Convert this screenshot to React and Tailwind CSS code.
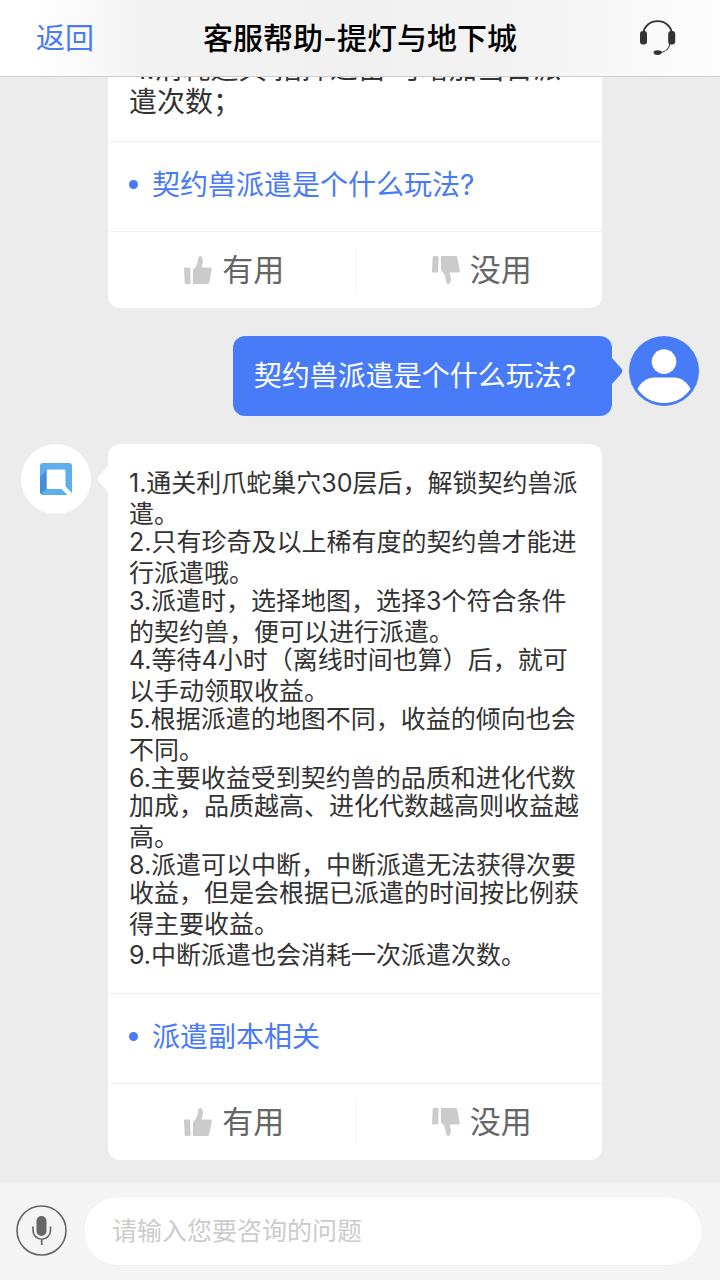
import React, { useState } from 'react';

const answerLines = [
  ['1.通关利爪蛇巢穴30层后，解锁契约兽派', '遣。'],
  ['2.只有珍奇及以上稀有度的契约兽才能进', '行派遣哦。'],
  ['3.派遣时，选择地图，选择3个符合条件', '的契约兽，便可以进行派遣。'],
  ['4.等待4小时（离线时间也算）后，就可', '以手动领取收益。'],
  ['5.根据派遣的地图不同，收益的倾向也会', '不同。'],
  ['6.主要收益受到契约兽的品质和进化代数', '加成，品质越高、进化代数越高则收益越', '高。'],
  ['8.派遣可以中断，中断派遣无法获得次要', '收益，但是会根据已派遣的时间按比例获', '得主要收益。'],
  ['9.中断派遣也会消耗一次派遣次数。'],
];

function ThumbIcon({ down }) {
  return (
    <svg viewBox="0 0 28 28" className={`size-7 fill-[#cbcbcb] ${down ? '-scale-y-100' : ''}`} aria-hidden="true">
      <path d="M1 11.5H5.2Q6.2 11.5 6.2 12.5L6.6 27Q6.6 28 5.6 28H1.8Q.8 28 .7 27L0 12.5Q0 11.5 1 11.5Z" />
      <path d="M9 13.6C12 11.8 13.6 8 14 3.2C14.2 1 15.2 0 16.4 0C18 .2 19 2.6 18.9 5C18.8 7.4 18.2 9.6 17.6 11.5H26.6Q28 11.5 27.8 13L25.2 26.6Q24.9 28 23.6 28H10Q8.8 28 8.8 26.8Z" />
    </svg>
  );
}

function HeadsetIcon() {
  return (
    <svg viewBox="0 0 36 36" className="size-9" fill="none" aria-hidden="true">
      <path d="M3.4 13C4.2 6 10.2 1.2 17.6 1.2S31 6 31.8 13" stroke="#333" strokeWidth="1.8" />
      <rect x="0" y="11" width="7" height="13.5" rx="3" fill="#333" />
      <rect x="28.2" y="11" width="7" height="13.5" rx="3" fill="#333" />
      <path d="M30 23.5C29 29 25.5 32 20 32.6" stroke="#333" strokeWidth="1.1" />
      <ellipse cx="17.6" cy="32.6" rx="4" ry="2.3" fill="#333" />
    </svg>
  );
}

function BotAvatar() {
  return (
    <div className="flex size-[70px] shrink-0 items-center justify-center rounded-full bg-white">
      <svg viewBox="0 0 32 32" className="size-8" aria-hidden="true">
        <path d="M3 0H29Q32 0 32 3V30L25.5 23.5V8Q25.5 6.500 24 6.500H8Q6.500 6.500 6.500 8V24.5Q6.500 26 8 26H21.500L27.500 32H3Q0 32 0 29V3Q0 0 3 0Z" fill="#5caeec" />
        <path d="M6.500 7V25.5L1 31Q0 30 0 29V14Z" fill="#4690d8" />
      </svg>
    </div>
  );
}

function UserAvatar() {
  return (
    <svg viewBox="0 0 70 70" className="size-[70px] shrink-0" aria-hidden="true">
      <circle cx="35" cy="35" r="35" fill="#487bf8" />
      <circle cx="35" cy="25.6" r="12.3" fill="#fff" />
      <path d="M26 41.5H45C52 41.5 58 46 61.5 53C55 62 46 67 35 67S15 62 8.5 53C12 46 18 41.5 26 41.5Z" fill="#fff" />
    </svg>
  );
}

function AnswerCard({ children, link }) {
  return (
    <div className="relative w-[494px] rounded-xl bg-white">
      <div className="px-[21px] pt-[25px] pb-6 text-[#333]">{children}</div>
      <div className="flex h-[90px] items-center border-t border-[#f1f1f1] px-[21px] pb-1">
        <span className="mr-3.5 size-[9px] rounded-full bg-[#487bf8]" />
        <a href="#" className="whitespace-nowrap text-[28px] leading-9 text-[#487bf8]">{link}</a>
      </div>
      <div className="flex h-[77px] items-center border-t border-[#f1f1f1] text-[31px] text-[#666]">
        <button type="button" className="flex flex-1 items-center justify-center gap-2.5 pl-1.5">
          <ThumbIcon />
          有用
        </button>
        <span className="h-[46px] w-px bg-[#f4f4f4]" />
        <button type="button" className="flex flex-1 items-center justify-center gap-2.5 pl-1.5">
          <ThumbIcon down />
          没用
        </button>
      </div>
    </div>
  );
}

export default function App() {
  const [question, setQuestion] = useState('');

  return (
    <div className="flex h-screen flex-col bg-[#ececec] font-['Inter','Noto_Sans_CJK_SC',sans-serif]">
      <header className="z-10 flex h-[77px] shrink-0 items-center justify-between border-b border-[#cfcfcf] bg-[linear-gradient(90deg,#fff_5%,#f3f3f3_20%,#f1f1f1_50%,#f4f4f4_75%,#fdfdfd)] pr-11 pl-9">
        <button type="button" className="w-[88px] pt-0.5 text-left text-[29px] text-[#487bf8]">返回</button>
        <h1 className="text-[30px] font-medium text-black">客服帮助-提灯与地下城</h1>
        <button type="button" aria-label="人工客服" className="flex w-20 justify-end">
          <HeadsetIcon />
        </button>
      </header>

      <main className="flex flex-1 flex-col justify-end gap-7 overflow-hidden pb-[23px]">
        <div className="flex pl-[108px]">
          <AnswerCard link="契约兽派遣是个什么玩法?">
            <p className="text-[28px] leading-[30px] whitespace-nowrap">
              <span className="block pl-1.5">1.消耗道具‘指挥之笛’可增加当日派</span>
              <span className="block pt-[3px]">遣次数；</span>
            </p>
          </AnswerCard>
        </div>

        <div className="flex items-start justify-end gap-[17px] pr-[21px]">
          <div className="relative flex h-20 items-center rounded-xl bg-[#487bf8] pr-9 pl-[21px] text-[28px] whitespace-nowrap text-white">
            契约兽派遣是个什么玩法?
            <svg viewBox="0 0 11 26" className="absolute top-[22px] left-full h-[26px] w-[11px]" aria-hidden="true">
              <path d="M0 0L9.8 11Q11 13 9.8 15L0 26Z" fill="#487bf8" />
            </svg>
          </div>
          <UserAvatar />
        </div>

        <div className="flex items-start gap-[17px] pl-[21px]">
          <BotAvatar />
          <div className="relative">
            <svg viewBox="0 0 11 26" className="absolute top-[22px] right-full h-[26px] w-[11px]" aria-hidden="true">
              <path d="M11 0L1.2 11Q0 13 1.2 15L11 26Z" fill="#fff" />
            </svg>
            <AnswerCard link="派遣副本相关">
              {answerLines.map((lines) => (
                <p key={lines[0]} className="text-[25px] leading-7 whitespace-nowrap">
                  {lines.map((line) => (
                    <span key={line} className="block last:pt-[3px]">{line}</span>
                  ))}
                </p>
              ))}
            </AnswerCard>
          </div>
        </div>
      </main>

      <footer className="flex h-[97px] shrink-0 items-center gap-4 border-t border-[#f0f0f0] bg-[#f5f5f5] pr-[17px] pb-[3px] pl-4">
        <button type="button" aria-label="语音输入" className="shrink-0">
          <svg viewBox="0 0 51 51" className="size-[51px]" fill="none" stroke="#666" aria-hidden="true">
            <circle cx="25.5" cy="25.5" r="24.5" strokeWidth="1.6" />
            <rect x="20.5" y="11" width="10" height="20" rx="5" fill="#666" stroke="none" />
            <path d="M17 21.5V25.5A8.7 8.7 0 0 0 34.5 25.5V21.5M25.7 34V40" strokeWidth="1.7" />
          </svg>
        </button>
        <input
          type="text"
          aria-label="咨询问题"
          value={question}
          onChange={(e) => setQuestion(e.target.value)}
          placeholder="请输入您要咨询的问题"
          className="h-[70px] min-w-0 flex-1 rounded-full border border-[#f0f0f0] bg-white px-7 text-[25px] text-[#333] outline-none placeholder:text-[#ccc]"
        />
      </footer>
    </div>
  );
}
